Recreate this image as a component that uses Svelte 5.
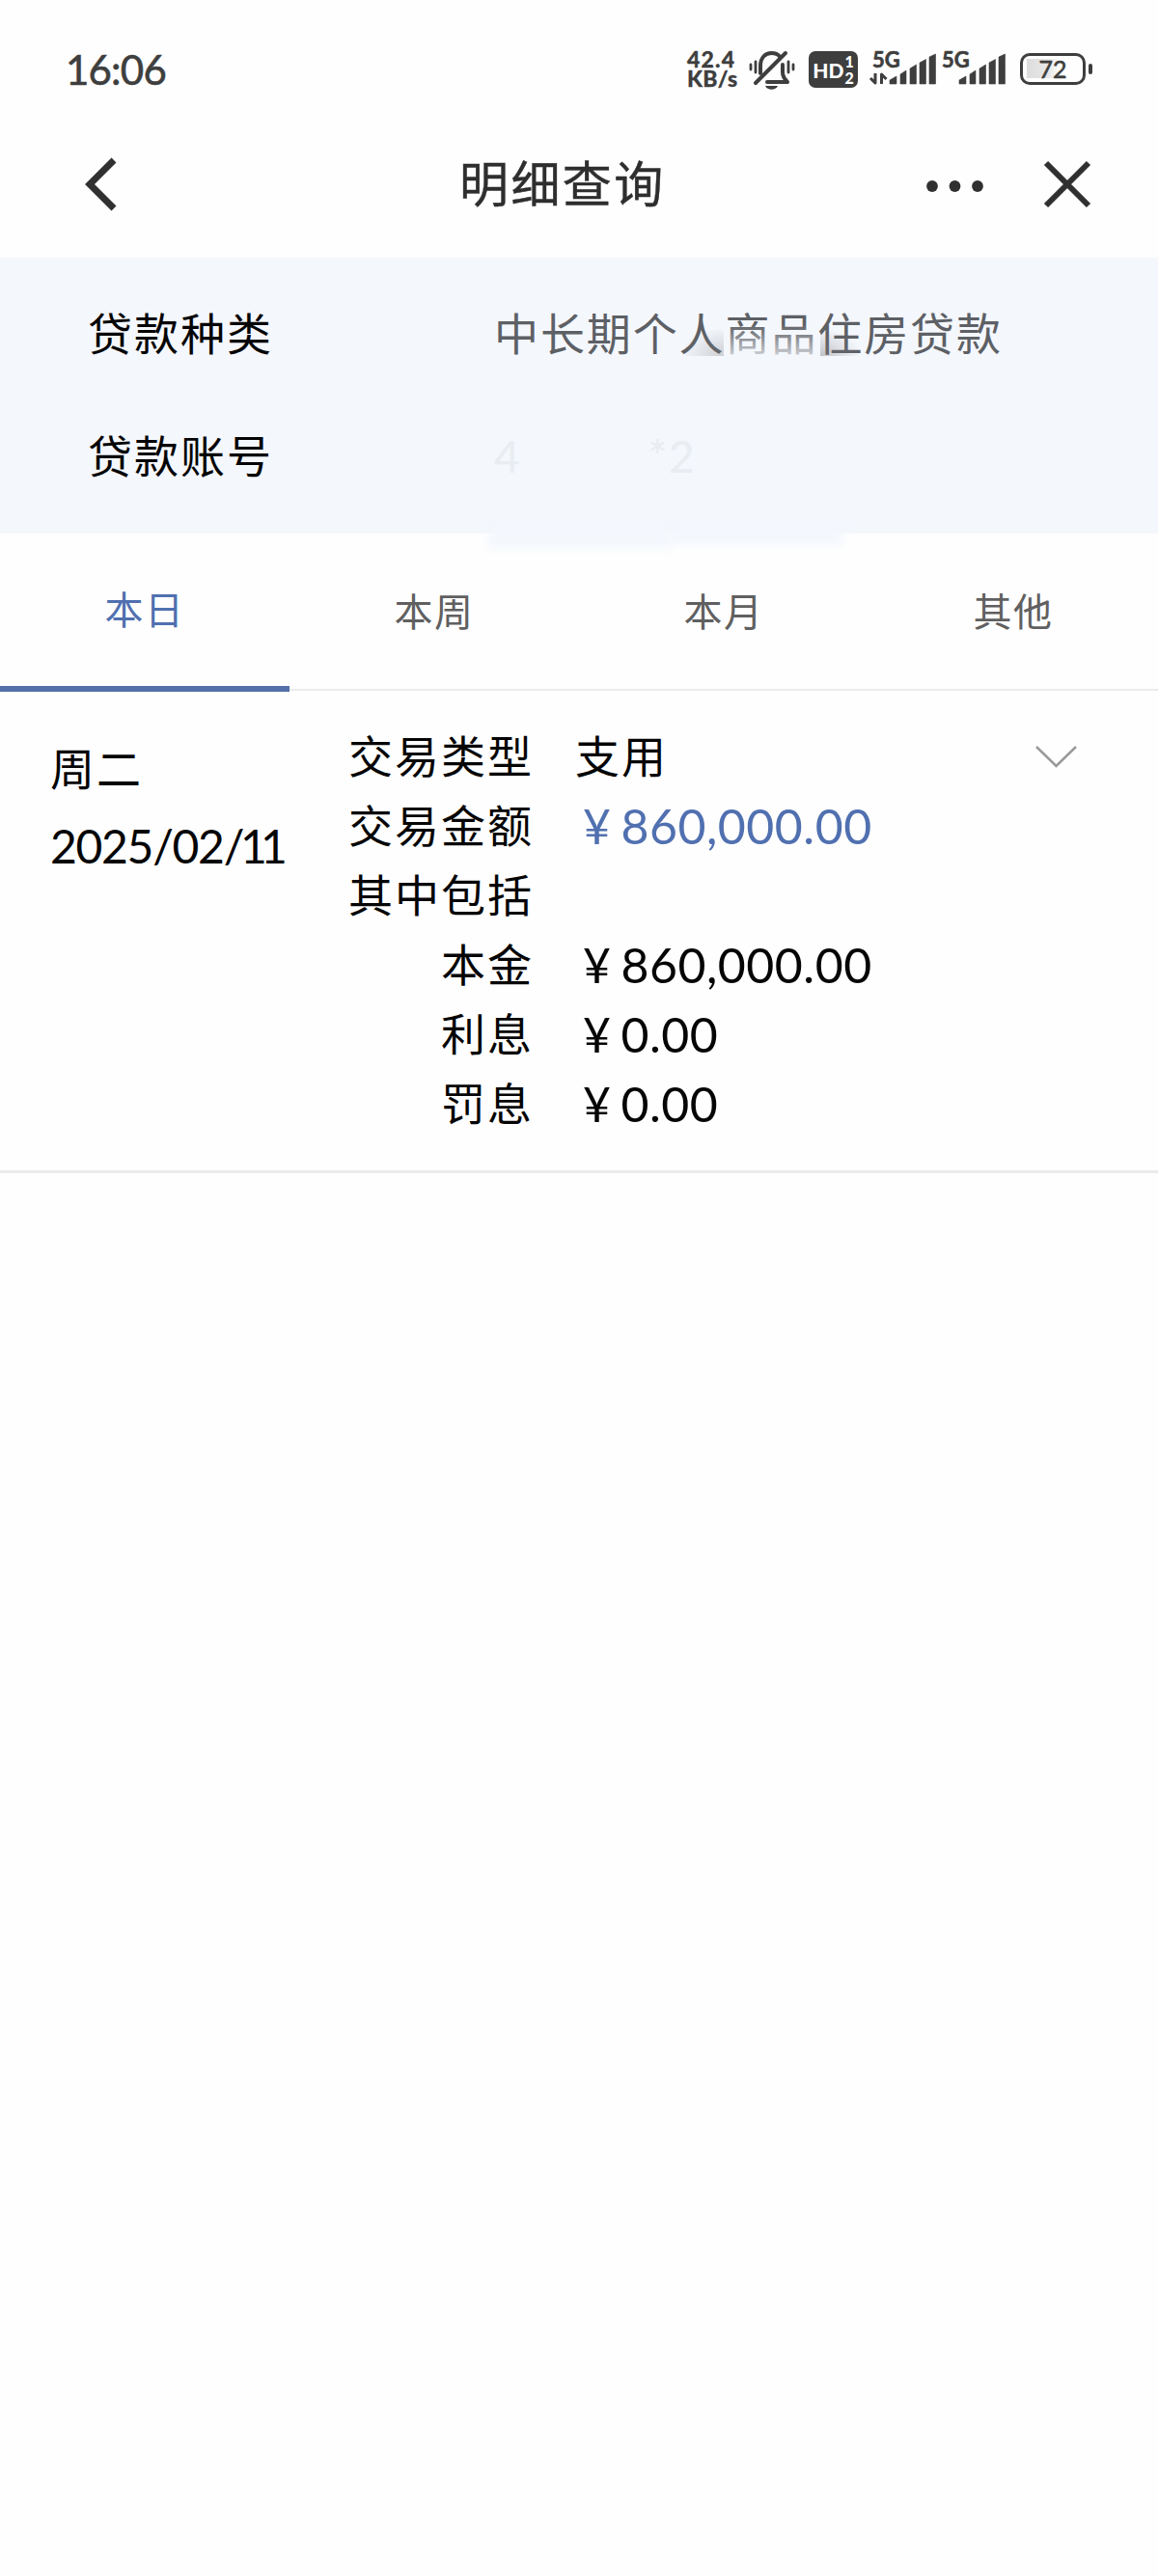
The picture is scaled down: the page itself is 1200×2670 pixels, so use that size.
<script>
  const loan = {
    type: "中长期个人商品住房贷款",
    account: ["4", "*2"],
  };

  const tabs = ["本日", "本周", "本月", "其他"];
  let active = tabs[0];

  const records = [
    {
      weekday: "周二",
      date: ["2025/02/", "11"],
      kind: "支用",
      amount: "860,000.00",
      parts: [
        { label: "本金", value: "860,000.00" },
        { label: "利息", value: "0.00" },
        { label: "罚息", value: "0.00" },
      ],
    },
  ];
</script>

<div class="page">
  <header class="status">
    <span class="clock">16:06</span>
    <div class="speed"><span class="rate">42.4</span><span>KB/s</span></div>
    <svg class="bell" width="50" height="42" viewBox="0 0 50 42">
      <g fill="none" stroke="#3e3e3e" stroke-width="4" stroke-linecap="round" stroke-linejoin="round">
        <path d="M13 24V16C13 8 18 3 24.500 3C28 3 31 4 33 6.500" />
        <path d="M36 15V23C36 27 38 30 41 33H20" />
        <path d="M39 3L8 34" />
        <path d="M3 15V20M8 12V23M42 12V23M47 15V20" stroke-width="2.800" />
      </g>
      <path d="M18 37H31C29 42 20 42 18 37Z" fill="#3e3e3e" />
    </svg>
    <div class="hd">
      <span>HD</span>
      <div class="sims"><i>1</i><i>2</i></div>
    </div>
    <svg class="signal first" width="70" height="36" viewBox="0 0 70 36">
      <text x="3" y="17">5G</text>
      <path class="data" d="M6 23V33L1 28M12.500 34V24L17.500 29" />
      <path d="M21 34V30L28 26V34ZM32 34V24L38 20V34ZM42 34V18L48.500 14V34ZM52 34V12L58.500 8.500V34ZM62 34V6L68.500 3V34Z" />
    </svg>
    <svg class="signal" width="70" height="36" viewBox="0 0 70 36">
      <text x="3" y="17">5G</text>
      <path d="M21 34V30L28 26V34ZM32 34V24L38 20V34ZM42 34V18L48.500 14V34ZM52 34V12L58.500 8.500V34ZM62 34V6L68.500 3V34Z" />
    </svg>
    <div class="battery"><span>72</span></div>
    <div class="tip"></div>
  </header>

  <nav class="titlebar">
    <svg class="back" width="36" height="58" viewBox="0 0 36 58">
      <path d="M31 4L6 29L31 54" />
    </svg>
    <h1>明细查询</h1>
    <svg class="more" width="60" height="14" viewBox="0 0 60 14">
      <circle cx="7" cy="7" r="5.900" />
      <circle cx="30.500" cy="7" r="5.900" />
      <circle cx="54" cy="7" r="5.900" />
    </svg>
    <svg class="close" width="50" height="50" viewBox="0 0 50 50">
      <path d="M3 3L47 47M47 3L3 47" />
    </svg>
  </nav>

  <section class="loan">
    <div class="line">
      <span class="name">贷款种类</span>
      <span class="value">
        {loan.type}
        <i class="fade"></i>
        <i class="smudge one"></i>
        <i class="smudge two"></i>
      </span>
    </div>
    <div class="line">
      <span class="name">贷款账号</span>
      <span class="value masked">
        {#each loan.account as part}<b>{part}</b>{/each}
      </span>
    </div>
    <i class="spill"></i>
    <i class="spill short"></i>
  </section>

  <div class="tabs">
    {#each tabs as tab}
      <button class:active={tab === active} on:click={() => (active = tab)}>{tab}</button>
    {/each}
  </div>

  {#each records as record}
    <article class="record">
      <div class="day">
        <div>{record.weekday}</div>
        <div class="date">{record.date[0]}<span>{record.date[1]}</span></div>
      </div>
      <dl>
        <dt>交易类型</dt>
        <dd>{record.kind}</dd>
        <dt>交易金额</dt>
        <dd class="money blue"><span>¥</span>{record.amount}</dd>
        <dt>其中包括</dt>
        <dd></dd>
        {#each record.parts as part}
          <dt>{part.label}</dt>
          <dd class="money"><span>¥</span>{part.value}</dd>
        {/each}
      </dl>
      <svg class="arrow" width="45" height="25" viewBox="0 0 45 25">
        <path d="M2 2L22.500 22L43 2" />
      </svg>
    </article>
  {/each}
</div>

<style>
  :global(body) {
    background: #fefefe;
  }

  .page {
    width: 1200px;
    min-height: 2670px;
    background: #fefefe;
    color: #050505;
    font-family: Lato, "Noto Sans CJK SC", sans-serif;
    font-size: 46px;
    letter-spacing: 2px;
  }

  .status {
    display: flex;
    align-items: flex-start;
    height: 122px;
    padding: 52px 0 0 68px;
    box-sizing: border-box;
    color: #3e3e3e;
    letter-spacing: 0;
  }

  .clock {
    width: 644px;
    font-size: 42px;
    line-height: 40px;
    letter-spacing: -0.8px;
    -webkit-text-stroke: 0.6px #3e3e3e;
  }

  .speed {
    display: flex;
    flex-direction: column;
    width: 63px;
    font-size: 23px;
    line-height: 19.5px;
    font-weight: 900;
    letter-spacing: 0.3px;
    -webkit-text-stroke: 0.3px #3e3e3e;
  }

  .rate {
    letter-spacing: 1.2px;
  }

  .bell {
    margin-right: 13px;
  }

  .hd {
    display: flex;
    align-items: center;
    justify-content: center;
    gap: 1px;
    width: 51px;
    height: 38px;
    margin: 1px 12px 0 0;
    border-radius: 7px;
    background: #3e3e3e;
    color: #fff;
    font-size: 21px;
    font-weight: 900;
  }

  .sims {
    display: flex;
    flex-direction: column;
    font-size: 16px;
    line-height: 17px;
  }

  .sims i {
    font-style: normal;
  }

  .signal {
    margin: 1px 0 0 2px;
    overflow: visible;
    fill: #3e3e3e;
    stroke: #3e3e3e;
    stroke-width: 0.6;
    stroke-linejoin: round;
  }

  .signal.first {
    margin-left: 0;
  }

  .signal .data {
    fill: none;
    stroke-width: 3;
  }

  .signal text {
    font-size: 22px;
    font-weight: 700;
    stroke-width: 0.6;
  }

  .battery {
    width: 68px;
    height: 33px;
    margin: 3px 3px 0 14px;
    box-sizing: border-box;
    border: 3.5px solid #3e3e3e;
    border-radius: 10px;
    background: linear-gradient(90deg, #ddd, #e8e8e8 50%, #fefefe 75%) 4px 3px / 46px 20px no-repeat;
    font-size: 25px;
    line-height: 26px;
    text-align: center;
    -webkit-text-stroke: 0.6px #3e3e3e;
  }

  .tip {
    width: 4px;
    height: 11px;
    margin-top: 14px;
    border-radius: 2px;
    background: #3e3e3e;
  }

  .titlebar {
    display: flex;
    align-items: center;
    height: 145px;
    padding: 0 68px 7px 87px;
    box-sizing: border-box;
  }

  .titlebar svg,
  .arrow {
    fill: none;
    stroke: #303030;
    stroke-width: 7;
  }

  h1 {
    width: 483px;
    margin: 0 0 0 353px;
    font-size: 51px;
    line-height: 60px;
    font-weight: 400;
    letter-spacing: 2.4px;
    color: #2e2e2e;
    -webkit-text-stroke: 0.4px #2e2e2e;
  }

  .titlebar .more {
    margin: 4px 62px 0 0;
    fill: #303030;
    stroke: none;
  }

  .titlebar .close {
    stroke-width: 6;
  }

  .loan {
    position: relative;
    height: 286px;
    padding: 15px 0 0 91px;
    box-sizing: border-box;
    background: #f4f7fc;
  }

  .line {
    display: flex;
    height: 127px;
    line-height: 127px;
  }

  .name {
    width: 421px;
  }

  .value {
    position: relative;
    color: #5d6065;
    white-space: nowrap;
    letter-spacing: 1.9px;
  }

  .fade,
  .smudge,
  .spill {
    position: absolute;
  }

  .fade {
    left: 240px;
    top: 54px;
    width: 92px;
    height: 36px;
    background: linear-gradient(180deg, #f4f7fc00, #f4f7fccc);
  }

  .smudge {
    top: 60px;
    width: 40px;
    height: 27px;
  }

  .smudge.one {
    left: 198px;
    background: radial-gradient(ellipse at 100% 100%, #77777a50, #f4f7fc00 80%);
  }

  .smudge.two {
    left: 338px;
    background: radial-gradient(ellipse at 0 100%, #77777a66, #f4f7fc00 75%);
  }

  .spill {
    left: 506px;
    top: 282px;
    width: 190px;
    height: 20px;
    background: #f4f8fd;
    filter: blur(4px);
  }

  .spill.short {
    left: 690px;
    width: 185px;
    height: 16px;
  }

  .masked {
    display: flex;
    gap: 131px;
    color: #e9ecf0;
  }

  .masked b {
    font-weight: 400;
  }

  .tabs {
    display: flex;
    height: 164px;
  }

  button {
    flex: 1;
    height: 163px;
    padding: 0;
    border: 0;
    border-bottom: 2px solid #ebebeb;
    background: none;
    color: #606060;
    font: inherit;
    font-size: 40px;
    letter-spacing: 1.6px;
    line-height: 163px;
  }

  button.active {
    height: 164px;
    border-bottom: 6px solid #5570a8;
    line-height: 156px;
    color: #5070b0;
  }

  .record {
    display: flex;
    height: 499px;
    padding: 31px 0 0 52px;
    box-sizing: border-box;
    border-bottom: 3px solid #ebebeb;
  }

  .day {
    width: 309px;
    padding-top: 9px;
    line-height: 80px;
  }

  .date {
    font-size: 48px;
    letter-spacing: -1.3px;
  }

  .date span {
    margin-left: -3px;
    letter-spacing: -7px;
  }

  dl {
    display: grid;
    grid-template-columns: 192px 1fr;
    grid-auto-rows: 72px;
    column-gap: 43px;
    width: 711px;
    margin: 0;
    line-height: 72px;
  }

  dt {
    text-align: right;
  }

  dd {
    margin: 0;
  }

  .money {
    padding-left: 8px;
    font-size: 50px;
    letter-spacing: 0.5px;
  }

  .money span {
    margin-right: 10px;
  }

  .blue {
    color: #5070b0;
  }

  .arrow {
    margin-top: 24px;
  }

  .record .arrow {
    stroke: #999;
    stroke-width: 2.5;
  }
</style>
